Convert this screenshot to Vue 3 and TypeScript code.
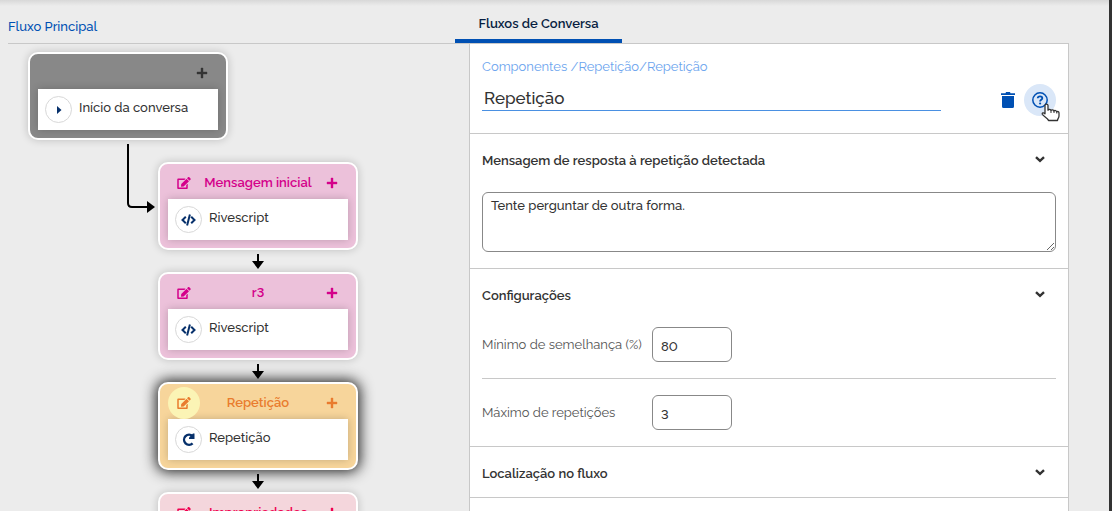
<script setup lang="ts">
import { ref } from 'vue'

type Tone = 'gray' | 'pink' | 'orange' | 'red'
type Icon = 'play' | 'code' | 'redo'

interface FlowNode {
  title: string
  label: string
  tone: Tone
  icon: Icon
  editable: boolean
  selected: boolean
}

const nodes: FlowNode[] = [
  { title: '', label: 'Início da conversa', tone: 'gray', icon: 'play', editable: false, selected: false },
  { title: 'Mensagem inicial', label: 'Rivescript', tone: 'pink', icon: 'code', editable: true, selected: false },
  { title: 'r3', label: 'Rivescript', tone: 'pink', icon: 'code', editable: true, selected: false },
  { title: 'Repetição', label: 'Repetição', tone: 'orange', icon: 'redo', editable: true, selected: true },
  { title: 'Impropriedades', label: '', tone: 'red', icon: 'code', editable: true, selected: false },
]

const name = ref('Repetição')
const message = ref('Tente perguntar de outra forma.')
const minSimilarity = ref('80')
const maxRepetitions = ref('3')

const editPath =
  'M402.6 83.2l90.2 90.2c3.8 3.8 3.8 10 0 13.8L274.4 405.6l-92.8 10.3c-12.4 1.4-22.9-9.1-21.5-21.5l10.3-92.8L388.8 83.2c3.8-3.8 10-3.8 13.8 0zm162-22.9l-48.8-48.8c-15.2-15.2-39.9-15.2-55.2 0l-35.4 35.4c-3.8 3.8-3.8 10 0 13.8l90.2 90.2c3.8 3.8 10 3.8 13.8 0l35.4-35.4c15.2-15.3 15.2-40 0-55.2zM384 346.2V448H64V128h229.8c3.2 0 6.2-1.3 8.5-3.5l40-40c7.6-7.6 2.2-20.5-8.5-20.5H48C21.5 64 0 85.5 0 112v352c0 26.5 21.5 48 48 48h352c26.5 0 48-21.5 48-48V306.2c0-10.7-12.9-16-20.5-8.5l-40 40c-2.2 2.3-3.5 5.3-3.5 8.5z'
</script>

<template>
  <div class="app">
    <header class="topbar">
      <div class="crumb"><a href="#">Fluxo Principal</a></div>
      <nav class="tabs"><a href="#" class="tab">Fluxos de Conversa</a></nav>
    </header>

    <main class="body">
      <section class="canvas" aria-label="Fluxo">
        <template v-for="(node, i) in nodes" :key="i">
          <div v-if="i > 0" class="link">
            <svg v-if="i === 1" class="elbow-line" width="32" height="72" viewBox="0 0 32 72" aria-hidden="true">
              <path d="M3 0V59Q3 63 7 63H23" fill="none" stroke="#000" stroke-width="2" />
              <path d="M22 57L30 63L22 69Z" />
            </svg>
            <svg v-else width="14" height="16" viewBox="0 0 14 16" aria-hidden="true">
              <path d="M6 0h2v7h5L7 15L1 7h5z" />
            </svg>
          </div>
          <article class="node" :class="[node.tone, { selected: node.selected, first: i === 0 }]">
            <div class="node-head">
              <button v-if="node.editable" type="button" class="round edit" aria-label="Editar">
                <svg width="14" height="12" viewBox="0 0 576 512"><path :d="editPath" /></svg>
              </button>
              <span class="node-title">{{ node.title }}</span>
              <button type="button" class="round" aria-label="Adicionar">
                <svg width="12" height="12" viewBox="0 0 12 12"><path d="M5 1h2v4h4v2H7v4H5V7H1V5h4z" stroke="currentColor" stroke-width=".4" /></svg>
              </button>
            </div>
            <div class="node-item">
              <span class="badge">
                <svg v-if="node.icon === 'play'" width="6" height="8" viewBox="0 0 6 8"><path d="M1 0L5.500 4L1 8Z" /></svg>
                <svg v-else-if="node.icon === 'code'" width="15" height="12" viewBox="0 0 15 12">
                  <path d="M4.800 2.800L1.500 6l3.300 3.200M10.200 2.800L13.500 6l-3.300 3.200M8.900.4L6.100 11.600" fill="none" stroke="currentColor" stroke-width="2" />
                </svg>
                <svg v-else width="13" height="13" viewBox="0 0 13 13">
                  <path d="M10.600 10.300A5 5 0 1 1 10.600 3.200" fill="none" stroke="currentColor" stroke-width="2.400" />
                  <path d="M12.500.5v5.500H7V4.500L11 .5z" />
                </svg>
              </span>
              <span class="node-label">{{ node.label }}</span>
            </div>
          </article>
        </template>
      </section>

      <section class="panel">
        <div class="panel-head">
          <nav class="path">
            <a href="#">Componentes</a> /<a href="#">Repetição</a>/<a href="#">Repetição</a>
          </nav>
          <div class="title-row">
            <input v-model="name" class="title" type="text" aria-label="Nome do componente" />
            <div class="actions">
              <button type="button" class="action" aria-label="Excluir">
                <svg width="14" height="16" viewBox="0 0 14 16"><path d="M0 1.200h4.500L5 0h4l.5 1.200H14V3H0zM1 4h12v10.500Q13 16 11.500 16h-9Q1 16 1 14.500z" /></svg>
              </button>
              <button type="button" class="action hover" aria-label="Ajuda">
                <svg width="16" height="16" viewBox="0 0 16 16">
                  <circle cx="8" cy="8" r="7.200" fill="none" stroke="currentColor" stroke-width="1.500" />
                  <path d="M5.700 6.300C5.900 3.700 10.300 3.800 10.300 6.300C10.300 7.800 8.100 7.800 8.100 9.400" fill="none" stroke="currentColor" stroke-width="1.800" />
                  <circle cx="8.100" cy="11.500" r="1.100" />
                </svg>
                <svg class="pointer" width="20" height="20" viewBox="0 0 20 20" aria-hidden="true">
                  <path d="M4 2.500C4 .7 7 .7 7 2.500V7.200C7.500 6 9.800 6 10 7.500C10.600 6.400 12.700 6.600 13 8C13.700 7 15.500 7.500 15.800 8.800C16.600 8 18 8.700 18 10V13C18 15.200 16.500 15.500 16.500 17.500H7.500C6.500 15 2.500 13.500 1.300 11.300C.8 9.700 2.600 9.200 4 10.800Z" fill="#fff" stroke="#333" stroke-width="1.300" stroke-linejoin="round" />
                  <path d="M10 7.500v2.500M13 8v2M15.800 8.800v1.700" stroke="#333" />
                </svg>
              </button>
            </div>
          </div>
        </div>

        <div class="group">
          <div class="group-head">
            <label for="message">Mensagem de resposta à repetição detectada</label>
            <button type="button" class="toggle" aria-label="Recolher mensagem">
              <svg width="10" height="7" viewBox="0 0 10 7"><path d="M1 1.200L5 4.900L9 1.200" /></svg>
            </button>
          </div>
          <div class="group-body"><textarea id="message" v-model="message"></textarea></div>
        </div>

        <div class="group">
          <div class="group-head">
            <span>Configurações</span>
            <button type="button" class="toggle" aria-label="Recolher configurações">
              <svg width="10" height="7" viewBox="0 0 10 7"><path d="M1 1.200L5 4.900L9 1.200" /></svg>
            </button>
          </div>
          <div class="group-body">
            <div class="field">
              <label for="min">Mínimo de semelhança (%)</label>
              <input id="min" v-model="minSimilarity" type="text" inputmode="numeric" />
            </div>
            <div class="field">
              <label for="max">Máximo de repetições</label>
              <input id="max" v-model="maxRepetitions" type="text" inputmode="numeric" />
            </div>
          </div>
        </div>

        <div class="group">
          <div class="group-head">
            <span>Localização no fluxo</span>
            <button type="button" class="toggle" aria-label="Expandir localização">
              <svg width="10" height="7" viewBox="0 0 10 7"><path d="M1 1.200L5 4.900L9 1.200" /></svg>
            </button>
          </div>
        </div>
      </section>
    </main>
  </div>
</template>

<style>
body {
  background: #ececec;
}
</style>

<style scoped>
* {
  box-sizing: border-box;
}
.app {
  display: flex;
  flex-direction: column;
  height: 100vh;
  overflow: hidden;
  padding-right: 40px;
  border-right: 3px solid #333;
  background: linear-gradient(#d8d8d8, #ececec 6px);
  color: #333;
  font: 500 13px/20px Raleway, "Open Sans", sans-serif;
  font-variant-numeric: lining-nums;
}
a {
  color: inherit;
  text-decoration: none;
}
button {
  padding: 0;
  border: 0;
  background: none;
  color: inherit;
  font: inherit;
  cursor: pointer;
}
svg {
  display: block;
  fill: currentColor;
}
.topbar {
  display: flex;
  flex: none;
  height: 44px;
  margin-left: 8px;
  border-bottom: 1px solid #c8c8c8;
}
.crumb {
  flex: 1;
  padding-top: 17px;
  color: #0050b3;
}
.tabs {
  width: 614px;
}
.tab {
  display: block;
  width: 167px;
  height: 43px;
  padding-top: 14px;
  border-bottom: 4px solid #0050b3;
  color: #071d41;
  font-weight: 600;
  text-align: center;
}
.body {
  display: flex;
  flex: 1;
  min-height: 0;
}
.canvas {
  flex: 1;
  padding: 8px 0 0 158px;
  overflow: hidden;
}
.node {
  width: 200px;
  padding: 3px 8px 8px;
  border: 2px solid #fff;
  border-radius: 10px;
  box-shadow: 0 0 8px rgba(0, 0, 0, 0.2);
}
.node.first {
  margin-left: -130px;
}
.node.selected {
  box-shadow: 0 0 14px 2px #222;
}
.gray {
  background: #888;
  color: #333;
}
.pink {
  background: #ecc1da;
  color: #d4008a;
}
.orange {
  background: #f7d59b;
  color: #e97c2e;
}
.red {
  background: #f4d6dc;
  color: #f00050;
}
.node-head {
  display: flex;
  align-items: center;
  height: 32px;
}
.node-title {
  flex: 1;
  font-weight: 600;
  text-align: center;
  white-space: nowrap;
}
.round {
  display: grid;
  place-items: center;
  width: 32px;
  height: 32px;
  border-radius: 50%;
}
.selected .edit {
  background: #fbf4b5;
}
.node-item {
  display: flex;
  align-items: center;
  gap: 7px;
  height: 41px;
  padding: 0 7px;
  background: #fff;
  box-shadow: 0 0 8px rgba(0, 0, 0, 0.2);
  color: #333;
}
.node-label {
  padding-bottom: 4px;
}
.badge {
  display: grid;
  place-items: center;
  width: 27px;
  height: 27px;
  border: 1px solid #d8d8d8;
  border-radius: 50%;
  color: #06306b;
}
.link {
  position: relative;
  z-index: 1;
  display: flex;
  justify-content: center;
  width: 200px;
  height: 22px;
  padding-top: 4px;
  color: #000;
}
.elbow-line {
  position: absolute;
  top: 4px;
  left: -33px;
}
.panel {
  flex: none;
  width: 600px;
  border: 1px solid #c8c8c8;
  border-width: 0 1px;
  background: #fff;
}
.panel-head {
  padding: 12px 12px 17px;
  border-bottom: 1px solid #c8c8c8;
}
.path {
  line-height: 22px;
  color: #6ba4ee;
  font-weight: 400;
}
.title-row {
  display: flex;
  justify-content: space-between;
  margin-top: 6px;
}
.title {
  width: 80%;
  height: 27px;
  padding: 2px 2px 0;
  border: 0;
  border-bottom: 1px solid #4a90e2;
  background: none;
  color: #333;
  font: 500 17px/24px Raleway, "Open Sans", sans-serif;
}
.actions {
  display: flex;
}
.action {
  position: relative;
  display: grid;
  place-items: center;
  width: 32px;
  height: 32px;
  border-radius: 50%;
  color: #0050b3;
}
.action.hover {
  background: #dae7f8;
}
.pointer {
  position: absolute;
  top: 19px;
  left: 17px;
}
.group {
  border-bottom: 1px solid #c8c8c8;
}
.group-head {
  display: flex;
  align-items: flex-start;
  justify-content: space-between;
  height: 50px;
  padding: 9px 12px 0;
  font-weight: 600;
  line-height: 36px;
}
.toggle {
  display: grid;
  place-items: center;
  width: 32px;
  height: 32px;
}
.toggle path {
  fill: none;
  stroke: #333;
  stroke-width: 2.4;
}
.group-body {
  padding: 8px 12px 16px;
}
textarea {
  display: block;
  width: 100%;
  height: 60px;
  padding: 3px 8px;
  border: 1px solid #888;
  border-radius: 6px;
  color: #333;
  font: inherit;
}
.field {
  display: flex;
}
.field + .field {
  margin-top: 16px;
  padding-top: 16px;
  border-top: 1px solid #c8c8c8;
}
.field label {
  width: 170px;
  padding-top: 8px;
  color: #555;
  font-weight: 400;
  white-space: nowrap;
}
.field input {
  width: 80px;
  height: 35px;
  padding: 4px 8px 0;
  border: 1px solid #888;
  border-radius: 6px;
  color: #333;
  font: inherit;
  font-variant-numeric: lining-nums;
}
</style>
